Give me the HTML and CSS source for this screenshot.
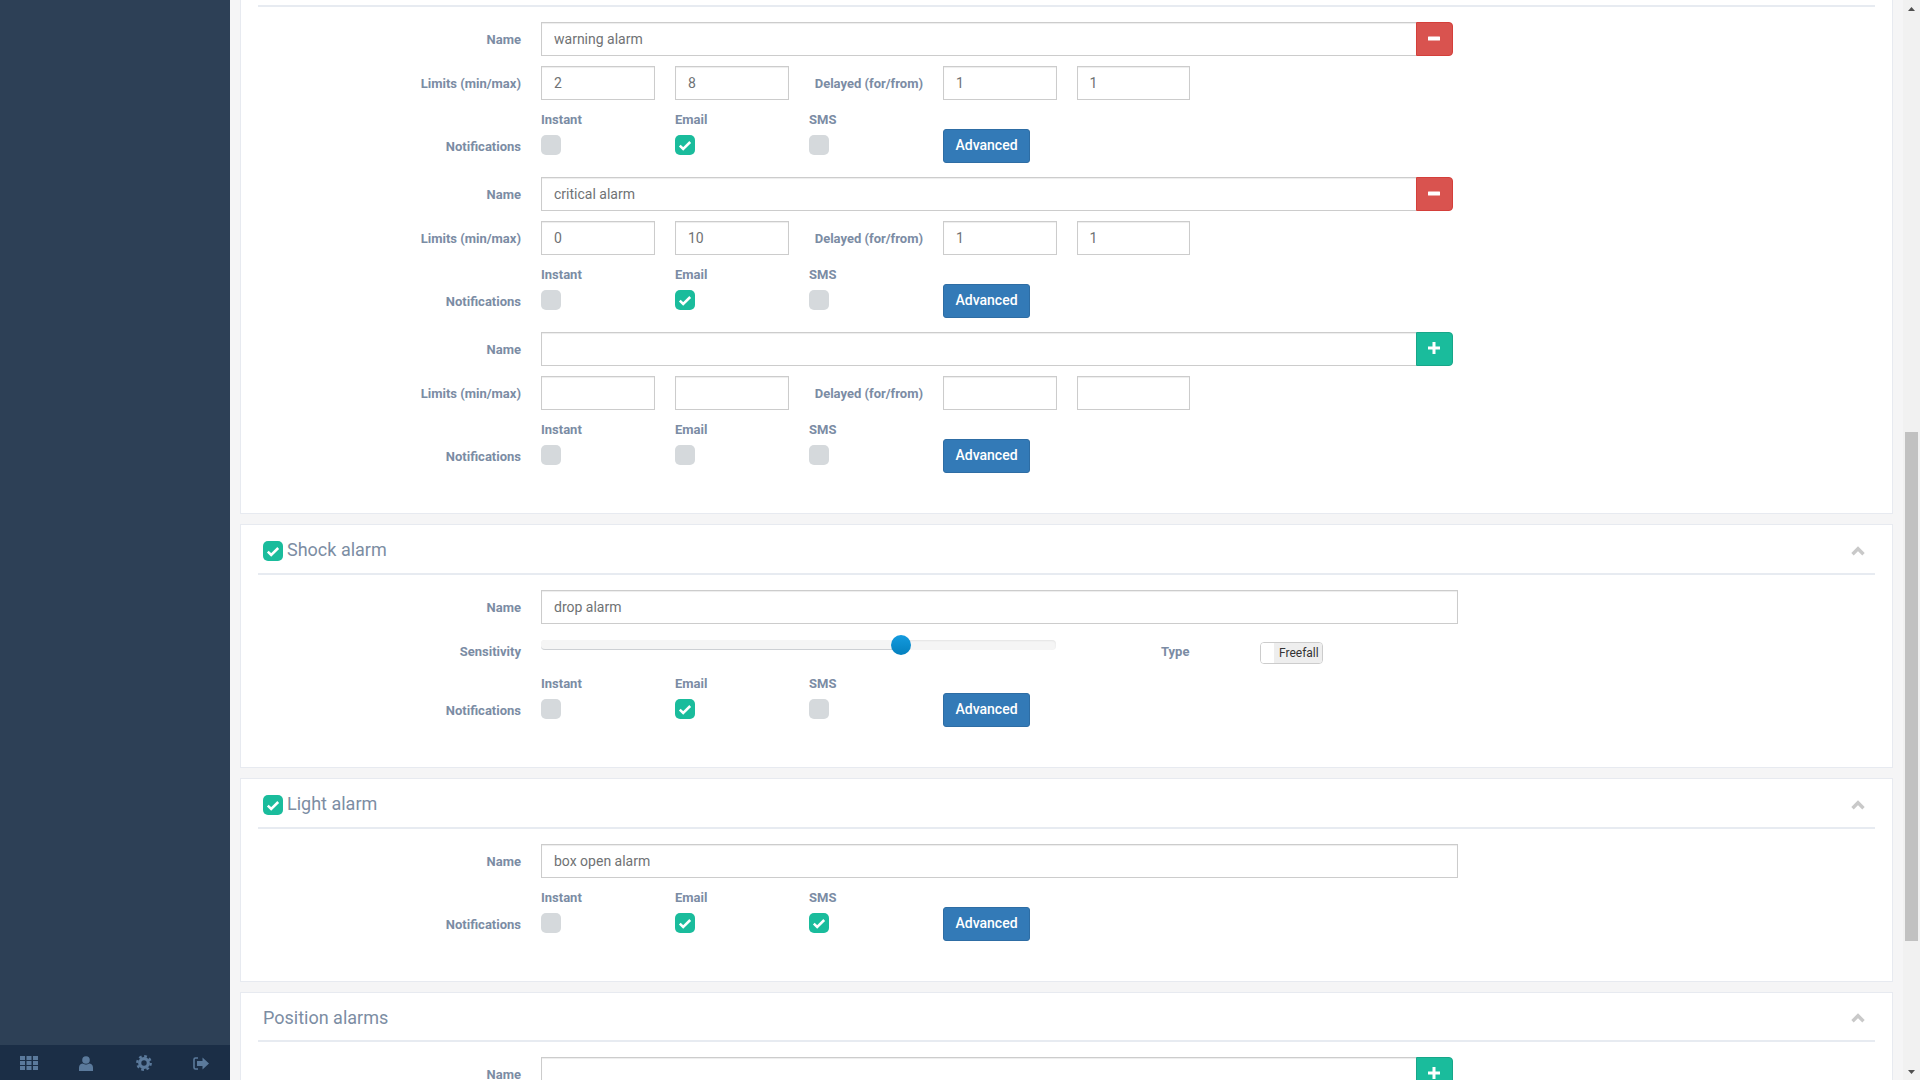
FILE: index.html
```html
<!DOCTYPE html>
<html lang="en">
<head>
<meta charset="utf-8">
<title>Alarms</title>
<link rel="stylesheet" href="styles.css">
</head>
<body>
<svg class="defs" aria-hidden="true">
  <symbol id="tick" viewBox="0 0 20 20"><path d="M4.800 10.600l3.400 3.400 7-7" fill="none" stroke="#fff" stroke-width="2.500"/></symbol>
  <symbol id="chev" viewBox="0 0 14 10"><path d="M1.500 8.200L7 2.700l5.500 5.500" fill="none" stroke="#c9c9c9" stroke-width="3.400"/></symbol>
  <symbol id="minus" viewBox="0 0 12 12"><rect y="3.500" width="12" height="4" rx=".5" fill="#fff"/></symbol>
  <symbol id="plus" viewBox="0 0 12 12"><path d="M4.500 0h3v4.500H12v3H7.500V12h-3V7.500H0v-3h4.500z" fill="#fff"/></symbol>
</svg>
<div class="app">
  <aside class="sidebar">
    <div class="side-fill"></div>
    <nav class="side-foot">
      <a class="foot-item"><svg width="18" height="14" viewBox="0 0 18 14"><path d="M0 0h5v4H0zM6.500 0h5v4h-5zM13 0h5v4h-5zM0 5h5v4H0zM6.500 5h5v4h-5zM13 5h5v4h-5zM0 10h5v4H0zM6.500 10h5v4h-5zM13 10h5v4h-5z" fill="#5b7a9c"/></svg></a>
      <a class="foot-item"><svg width="14" height="15" viewBox="0 0 14 15"><circle cx="7" cy="4" r="3.800" fill="#5b7a9c"/><path d="M0 15v-3.500C0 9 2 7.500 4 7.500c1 .8 2 1 3 1s2-.2 3-1c2 0 4 1.500 4 4V15z" fill="#5b7a9c"/></svg></a>
      <a class="foot-item foot-gear"><svg width="16" height="16" viewBox="0 0 16 16"><circle cx="8" cy="8" r="4.300" fill="none" stroke="#5b7a9c" stroke-width="3.200"/><circle cx="8" cy="8" r="6.700" fill="none" stroke="#5b7a9c" stroke-width="2.400" stroke-dasharray="2.700 2.560"/></svg></a>
      <a class="foot-item"><svg width="16" height="13" viewBox="0 0 16 13"><path d="M5 1H2.500A1.500 1.500 0 0 0 1 2.500v8A1.500 1.500 0 0 0 2.500 12H5" fill="none" stroke="#5b7a9c" stroke-width="1.600"/><path d="M9.500 0.500L16 6.500l-6.500 6V9H4V4h5.500z" fill="#5b7a9c"/></svg></a>
    </nav>
  </aside>

  <main class="main">
    <section class="card card-first">
      <header class="card-head"></header>
      <div class="card-body">
        <div class="form-grid">
          <label class="lbl">Name</label>
          <div class="input-group"><input class="inp" value="warning alarm"><button class="addon red"><svg class="ico"><use href="#minus"/></svg></button></div>
          <label class="lbl">Limits (min/max)</label>
          <input class="inp" value="2"><input class="inp" value="8">
          <label class="lbl lbl-inner">Delayed (for/from)</label>
          <input class="inp" value="1"><input class="inp" value="1">
          <label class="lbl lbl-end">Notifications</label>
          <div class="opt"><span class="opt-name">Instant</span><span class="cb"></span></div>
          <div class="opt"><span class="opt-name">Email</span><span class="cb on"><svg class="tick"><use href="#tick"/></svg></span></div>
          <div class="opt"><span class="opt-name">SMS</span><span class="cb"></span></div>
          <button class="btn">Advanced</button>
        </div>
        <div class="form-grid">
          <label class="lbl">Name</label>
          <div class="input-group"><input class="inp" value="critical alarm"><button class="addon red"><svg class="ico"><use href="#minus"/></svg></button></div>
          <label class="lbl">Limits (min/max)</label>
          <input class="inp" value="0"><input class="inp" value="10">
          <label class="lbl lbl-inner">Delayed (for/from)</label>
          <input class="inp" value="1"><input class="inp" value="1">
          <label class="lbl lbl-end">Notifications</label>
          <div class="opt"><span class="opt-name">Instant</span><span class="cb"></span></div>
          <div class="opt"><span class="opt-name">Email</span><span class="cb on"><svg class="tick"><use href="#tick"/></svg></span></div>
          <div class="opt"><span class="opt-name">SMS</span><span class="cb"></span></div>
          <button class="btn">Advanced</button>
        </div>
        <div class="form-grid">
          <label class="lbl">Name</label>
          <div class="input-group"><input class="inp"><button class="addon green"><svg class="ico ico-plus"><use href="#plus"/></svg></button></div>
          <label class="lbl">Limits (min/max)</label>
          <input class="inp"><input class="inp">
          <label class="lbl lbl-inner">Delayed (for/from)</label>
          <input class="inp"><input class="inp">
          <label class="lbl lbl-end">Notifications</label>
          <div class="opt"><span class="opt-name">Instant</span><span class="cb"></span></div>
          <div class="opt"><span class="opt-name">Email</span><span class="cb"></span></div>
          <div class="opt"><span class="opt-name">SMS</span><span class="cb"></span></div>
          <button class="btn">Advanced</button>
        </div>
      </div>
    </section>

    <section class="card">
      <header class="card-head">
        <span class="cb on head-cb"><svg class="tick"><use href="#tick"/></svg></span>
        <h2 class="card-title">Shock alarm</h2>
        <svg class="chev"><use href="#chev"/></svg>
      </header>
      <div class="card-body">
        <div class="form-grid">
          <label class="lbl">Name</label>
          <input class="inp inp-wide" value="drop alarm">
          <label class="lbl lbl-short">Sensitivity</label>
          <div class="slider-row">
            <div class="slider"><div class="slider-sel"></div><div class="slider-handle"></div></div>
            <span class="type-lbl">Type</span>
            <div class="toggle"><span class="toggle-off"></span><span class="toggle-on">Freefall</span></div>
          </div>
          <label class="lbl lbl-end">Notifications</label>
          <div class="opt"><span class="opt-name">Instant</span><span class="cb"></span></div>
          <div class="opt"><span class="opt-name">Email</span><span class="cb on"><svg class="tick"><use href="#tick"/></svg></span></div>
          <div class="opt"><span class="opt-name">SMS</span><span class="cb"></span></div>
          <button class="btn">Advanced</button>
        </div>
      </div>
    </section>

    <section class="card">
      <header class="card-head">
        <span class="cb on head-cb"><svg class="tick"><use href="#tick"/></svg></span>
        <h2 class="card-title">Light alarm</h2>
        <svg class="chev"><use href="#chev"/></svg>
      </header>
      <div class="card-body">
        <div class="form-grid">
          <label class="lbl">Name</label>
          <input class="inp inp-wide" value="box open alarm">
          <label class="lbl lbl-end">Notifications</label>
          <div class="opt"><span class="opt-name">Instant</span><span class="cb"></span></div>
          <div class="opt"><span class="opt-name">Email</span><span class="cb on"><svg class="tick"><use href="#tick"/></svg></span></div>
          <div class="opt"><span class="opt-name">SMS</span><span class="cb on"><svg class="tick"><use href="#tick"/></svg></span></div>
          <button class="btn">Advanced</button>
        </div>
      </div>
    </section>

    <section class="card">
      <header class="card-head card-head-short">
        <h2 class="card-title card-title-plain">Position alarms</h2>
        <svg class="chev"><use href="#chev"/></svg>
      </header>
      <div class="card-body">
        <div class="form-grid">
          <label class="lbl">Name</label>
          <div class="input-group"><input class="inp"><button class="addon green"><svg class="ico ico-plus"><use href="#plus"/></svg></button></div>
        </div>
      </div>
    </section>
  </main>

  <div class="scrollbar">
    <svg class="sb-arrow" viewBox="0 0 7 4"><path d="M3.500 0L7 4H0z" fill="#505050"/></svg>
    <div class="sb-track"><div class="sb-thumb"></div></div>
    <svg class="sb-arrow" viewBox="0 0 7 4"><path d="M0 0h7L3.500 4z" fill="#505050"/></svg>
  </div>
</div>
</body>
</html>
```

FILE: styles.css
```css
* { box-sizing: border-box; }
html, body { margin: 0; height: 100%; overflow: hidden; }
body { font-family: Roboto, "Liberation Sans", sans-serif; font-size: 14px; color: #6f7274; background: #f5f5f6; }
.defs { display: none; }

.app { display: flex; height: 1080px; overflow: hidden; }

/* sidebar */
.sidebar { width: 230px; flex: none; display: flex; flex-direction: column; background: #2d4056; }
.side-fill { flex: 1; }
.side-foot { height: 35px; display: flex; background: #1b2e46; }
.foot-item { flex: 1; display: flex; align-items: center; justify-content: center; padding-top: 1px; }
.foot-gear { padding-left: 1px; }

/* main */
.main { flex: 1; min-width: 0; padding: 0 10px; background: #f5f5f6; }
.card { background: #fff; border: 1px solid #e7eaf0; margin-bottom: 10px; }
.card-first { margin-top: -44px; }
.card-head { height: 48px; margin: 0 17px; padding: 0 10px 0 5px; display: flex; align-items: center; }
.card-head-short { height: 47px; }
.card-title { margin: 2px 0 0 4px; flex: 1; font-size: 18px; font-weight: 400; line-height: 24px; color: #7c8da3; }
.card-title-plain { margin-left: 0; }
.head-cb { margin-top: 4px; }
.card-body { margin: 0 17px; padding: 15px 0 40px; border-top: 2px solid #e7ebf1; }
.chev { width: 14px; height: 10px; margin-top: 3px; }

/* form grid */
.form-grid { display: grid; grid-template-columns: 263px 114px 114px 114px 113.5px 113.5px 248px; column-gap: 20px; row-gap: 10px; margin-bottom: 14px; }
.form-grid:last-child { margin-bottom: 0; }
.lbl { grid-column: 1; height: 34px; font-size: 13px; font-weight: 700; line-height: 36px; text-align: right; color: #7b8ca4; white-space: nowrap; }
.lbl-inner { grid-column: auto; }
.lbl-end { align-self: end; }
.lbl-short { height: 30px; }

.inp { width: 100%; height: 34px; padding: 0 12px; border: 1px solid #ccc; border-radius: 0; background: #fff; color: #6f7274; font: 14px Roboto, "Liberation Sans", sans-serif; box-shadow: inset 0 1px 1px rgba(0,0,0,.075); outline: none; }
.inp-wide { grid-column: 2 / -1; }
.input-group { grid-column: 2 / -1; display: flex; margin-right: 5px; }
.input-group .inp { flex: 1; min-width: 0; border-right: 0; }
.addon { width: 37px; height: 34px; flex: none; padding: 0; display: flex; align-items: center; justify-content: center; border-radius: 0 4px 4px 0; }
.addon.red { background: #d9534f; border: 1px solid #d43f3a; }
.addon.green { background: #1abc9c; border: 1px solid #18a689; }
.ico { width: 12px; height: 12px; margin: -1px 1px 0 0; }
.ico-plus { margin-top: -2px; }

.opt { display: flex; flex-direction: column; align-items: flex-start; height: 53px; }
.opt-name { padding-top: 1px; font-size: 13px; font-weight: 700; line-height: 18px; color: #7b8ca4; margin-bottom: 6px; }
.cb { display: block; width: 20px; height: 20px; flex: none; border-radius: 5px; background: #d5d9dc; }
.cb.on { background: #1abc9c; }
.tick { display: block; width: 20px; height: 20px; }

.btn { align-self: end; justify-self: start; width: 87px; height: 34px; padding: 0 0 2px; border: 1px solid #2e6da4; border-radius: 3px; background: #337ab7; color: #fff; font: 500 14px Roboto, "Liberation Sans", sans-serif; }

/* slider */
.slider-row { grid-column: 2 / -1; display: flex; height: 30px; }
.slider { position: relative; width: 515px; height: 10px; margin-top: 6px; border-radius: 4px; background: #f5f5f5; box-shadow: inset 0 1px 2px rgba(0,0,0,.07); }
.slider-sel { width: 360px; height: 10px; border-radius: 4px 0 0 4px; background: #f5f5f5; border-bottom: 1px solid #cdd0d4; }
.slider-handle { position: absolute; left: 350px; top: -5px; width: 20px; height: 20px; border-radius: 50%; background: linear-gradient(#149bdf, #0480be); }
.type-lbl { width: 99px; margin-left: 105px; font-size: 13px; font-weight: 700; line-height: 36px; color: #7b8ca4; }
.toggle { display: flex; width: 63px; height: 22px; margin-top: 8px; border: 1px solid #ccc; border-radius: 4px; overflow: hidden; }
.toggle-off { width: 13px; background: #fff; }
.toggle-on { flex: 1; background: #eee; color: #333; font-size: 12px; line-height: 20px; padding-left: 5px; white-space: nowrap; }

/* scrollbar */
.scrollbar { width: 17px; flex: none; display: flex; flex-direction: column; align-items: center; background: #f1f1f1; }
.sb-arrow { width: 7px; height: 4px; margin: 7px 0 6px; flex: none; }
.sb-track { flex: 1; width: 100%; padding: 415px 2px 0; }
.sb-thumb { height: 509px; background: #c1c1c1; }
```
